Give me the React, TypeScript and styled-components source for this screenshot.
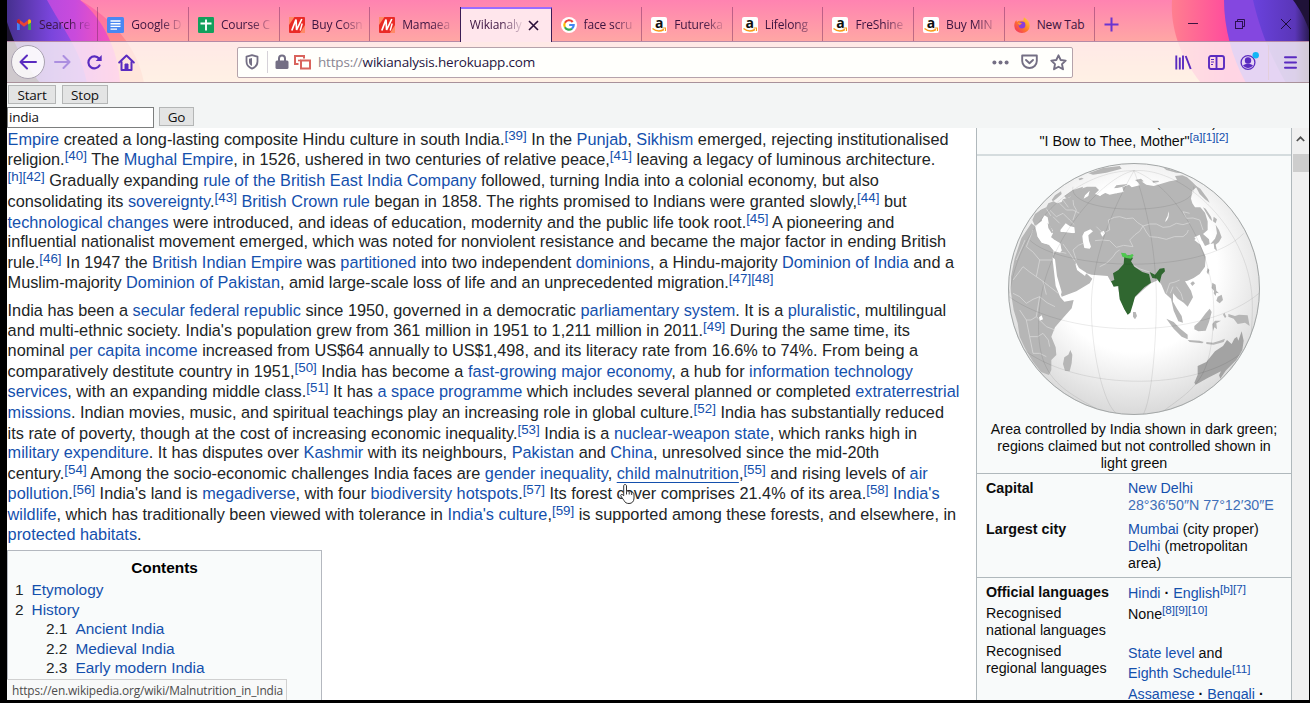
import React from "react";
import styled, { createGlobalStyle, css } from "styled-components";

const sans = `"Liberation Sans", Arial, sans-serif`;
const ui = `"Open Sans", "Noto Sans", sans-serif`;

const GlobalStyle = createGlobalStyle`
  * { box-sizing: border-box; }
  body { margin: 0; background: #000; overflow: hidden; font-family: ${sans}; }
`;

const Screen = styled.div`
  position: relative;
  width: 1310px;
  height: 703px;
  padding: 0 1px 3px 7px;
  background: #000;
  display: flex;
  flex-direction: column;
`;

/* ---------- browser chrome ---------- */

const Chrome = styled.header`
  position: relative;
  height: 83px;
  flex: none;
  border-bottom: 1px solid #a8919a;
  overflow: hidden;
`;

const Backdrop = styled.svg`
  position: absolute;
  inset: 0;
  display: block;
`;

const TabStrip = styled.div`
  position: relative;
  display: flex;
  height: 42px;
  padding-top: 7px;
  border-bottom: 1px solid #b58aa6;
`;

const Tab = styled.div<{ $active?: boolean; $w?: number }>`
  flex: none;
  width: ${(p) => p.$w ?? 90.65}px;
  height: 34px;
  display: flex;
  align-items: center;
  gap: 7px;
  padding: 1px 0 0 9px;
  border-right: 1px solid rgba(110, 40, 90, 0.45);
  ${(p) =>
    p.$active &&
    css`
      height: 35px;
      padding: 0 0 1px 9px;
      gap: 5px;
      background: #ffe6ec;
      border-top: 2px solid #9a6cff;
      border-right: 1px solid #3b1d55;
      box-shadow: -1px 0 0 #3b1d55;
    `}
`;

const TabLabel = styled.span<{ $fade?: boolean; $w?: number }>`
  font-family: ${ui};
  font-size: 12px;
  line-height: 18px;
  letter-spacing: -0.15px;
  width: ${(p) => p.$w ?? 51}px;
  overflow: hidden;
  white-space: nowrap;
  color: #3c1440;
  ${(p) =>
    p.$fade &&
    css`
      mask-image: linear-gradient(to right, #000 58%, transparent 104%);
    `}
`;

const PlusButton = styled.div`
  width: 33px;
  height: 34px;
  display: flex;
  align-items: center;
  justify-content: center;
`;

const WindowButtons = styled.div`
  margin-left: auto;
  height: 34px;
  display: flex;
  align-items: center;
  gap: 34.5px;
  padding-right: 17px;
`;

const NavBar = styled.div`
  position: relative;
  height: 40px;
  display: flex;
  align-items: center;
`;

const NavButtons = styled.div`
  display: flex;
  align-items: center;
  width: 230px;
  padding-left: 4px;
`;

const BackButton = styled.div`
  width: 34px;
  height: 34px;
  border-radius: 50%;
  border: 1px solid #a9a2b0;
  background: rgba(255, 255, 255, 0.8);
  display: flex;
  align-items: center;
  justify-content: center;
  margin-right: 7px;
`;

const NavIcon = styled.div<{ $mr?: number }>`
  width: 20px;
  height: 20px;
  margin-right: ${(p) => p.$mr ?? 0}px;
  display: flex;
  align-items: center;
  justify-content: center;
`;

const UrlBar = styled.div`
  width: 836px;
  height: 31px;
  border: 1px solid #b5a3ab;
  border-radius: 2px;
  background: #fffffc;
  display: flex;
  align-items: center;
  padding: 0 5px 0 6px;
`;

const UrlDivider = styled.i`
  width: 1px;
  height: 22px;
  background: #d6d2d8;
  margin: 0 7px;
`;

const Spacer = styled.i`
  width: 5px;
`;

const UrlText = styled.div`
  font-family: ${ui};
  font-size: 13.5px;
  line-height: 20px;
  letter-spacing: -0.18px;
  color: #8a8592;
  margin-left: 7px;
  flex: 1;
  b { font-weight: 400; color: #25143f; }
`;

const UrlIcons = styled.div`
  display: flex;
  align-items: center;
  gap: 12px;
`;

const Tools = styled.div`
  margin-left: auto;
  display: flex;
  align-items: center;
  padding-right: 12px;
`;

const ToolDivider = styled.i`
  width: 1px;
  height: 35px;
  background: #e3cfdc;
  margin: 0 15px 0 9px;
`;

/* ---------- page ---------- */

const Controls = styled.div`
  flex: none;
  height: 45px;
  background: #f3f5f5;
  display: flex;
  flex-direction: column;
  gap: 2px;
  padding-top: 2px;
`;

const ControlRow = styled.div<{ $gap: number }>`
  display: flex;
  gap: ${(p) => p.$gap}px;
  height: 21px;
  padding-left: 1px;
`;

const Button = styled.button<{ $w: number }>`
  width: ${(p) => p.$w}px;
  height: 19px;
  padding: 0;
  border: 1px solid #b4b6b6;
  border-radius: 0;
  background: #e3e4e4;
  font: 13.5px/18px ${ui};
  letter-spacing: -0.2px;
  color: #111;
`;

const Field = styled.input`
  width: 147px;
  height: 21px;
  margin-left: -1px;
  padding: 0 1px 1px 1px;
  border: 1px solid #7c7e7e;
  background: #fff;
  font: 13.5px/18px ${ui};
  letter-spacing: -0.2px;
  color: #111;
`;

const Page = styled.main`
  position: relative;
  flex: 1;
  min-height: 0;
  display: flex;
  background: #fff;
  overflow: hidden;
`;

const Article = styled.article`
  width: 969px;
  flex: none;
  padding-top: 0.4px;
  font-size: 16.3px;
  color: #222526;
`;

const Paragraph = styled.p`
  margin: 0 0 8px;
  padding-left: 0.6px;
`;

const Line = styled.span<{ $sup?: boolean }>`
  display: block;
  white-space: nowrap;
  line-height: 19.4px;
  padding-top: ${(p) => (p.$sup ? 1.3 : 0)}px;
`;

const A = styled.a<{ $hover?: boolean }>`
  color: #1450ad;
  text-decoration: ${(p) => (p.$hover ? "underline" : "none")};
  text-underline-offset: 3px;
`;

const Ref = styled.sup`
  font-size: 82%;
  line-height: 0;
  vertical-align: 5.4px;
  color: #1450ad;
`;

const Toc = styled.nav`
  width: 315px;
  height: 200px;
  margin-top: -2px;
  border: 1px solid #b4b8bf;
  background: #f9fbfb;
  font-size: 15.4px;
  padding: 7px 7px 0 7px;
`;

const TocTitle = styled.div`
  text-align: center;
  font-weight: 700;
  color: #000;
  line-height: 19px;
  margin-bottom: 3.4px;
`;

const TocItem = styled.div<{ $sub?: boolean; $h: number }>`
  height: ${(p) => p.$h}px;
  line-height: 20px;
  display: flex;
  gap: 8px;
  padding-left: ${(p) => (p.$sub ? 31 : 0)}px;
`;

const Infobox = styled.aside`
  width: 316px;
  flex: none;
  height: 700px;
  border: 1px solid #b0b8bc;
  border-top: 0;
  background: #f8fafa;
  font-size: 14.28px;
  line-height: 17.3px;
  color: #0c0c0c;
  text-align: center;
`;

const Motto = styled.div`
  height: 28px;
  border-bottom: 2px solid #d5dcde;
  overflow: hidden;
  display: flex;
  flex-direction: column;
  justify-content: flex-end;
  padding-bottom: 4px;
`;

const MottoLine = styled.div<{ $h: number }>`
  flex: none;
  height: ${(p) => p.$h}px;
  white-space: nowrap;
`;

const Figure = styled.figure`
  margin: 0;
  height: 318px;
  padding: 6px 0 0;
  border-bottom: 1px solid #b0b8bc;
  svg { display: block; margin: 0 auto; }
`;

const Caption = styled.figcaption`
  padding: 0 10px;
  margin-top: 4.5px;
`;

const Facts = styled.div<{ $h: number; $line?: boolean }>`
  height: ${(p) => p.$h}px;
  text-align: left;
  padding: 6px 0 0 9px;
  ${(p) => p.$line && css`border-bottom: 1px solid #b0b8bc;`}
`;

const Fact = styled.div<{ $h: number }>`
  display: grid;
  grid-template-columns: 142px 1fr;
  height: ${(p) => p.$h}px;
  white-space: nowrap;
`;

const Value = styled.div<{ $dy?: number; $lh?: number }>`
  padding-top: ${(p) => p.$dy ?? 0}px;
  line-height: ${(p) => p.$lh ?? 17.3}px;
`;

const Dot = styled.b`
  font-weight: 700;
`;

const Coord = styled(A)`
  color: #3f6fb8;
`;

const Scrollbar = styled.div`
  flex: 1;
  background: #f0f0f0;
  display: flex;
  flex-direction: column;
  align-items: center;
`;

const ScrollArrow = styled.div`
  height: 26px;
  display: flex;
  align-items: center;
  padding-bottom: 5px;
`;

const Thumb = styled.div`
  width: 16px;
  height: 18px;
  background: #cdcdcd;
`;

const StatusBar = styled.div`
  position: absolute;
  left: 0;
  bottom: 0;
  height: 21px;
  width: 280px;
  padding-left: 5px;
  border-top: 1px solid #d0d0d0;
  border-right: 1px solid #d0d0d0;
  background: #f8f9f9;
  font: 11.9px/20px ${ui};
  letter-spacing: -0.15px;
  color: #4c4c4c;
  white-space: nowrap;
`;

const Pointer = styled.svg`
  position: absolute;
  left: 618.5px;
  top: 483px;
`;

/* ---------- drawings ---------- */

const Theme = () => (
  <Backdrop width="1302" height="83" viewBox="7 0 1302 83" preserveAspectRatio="none">
    <defs>
      <linearGradient id="sky" x1="0" y1="0" x2="0" y2="1">
        <stop offset="0" stopColor="#ff83b1" />
        <stop offset="0.5" stopColor="#ffa7a4" />
        <stop offset="1" stopColor="#ffd0a0" />
      </linearGradient>
      <linearGradient id="violet" x1="0" y1="0" x2="1" y2="0">
        <stop offset="0" stopColor="#46308f" />
        <stop offset="0.55" stopColor="#7a45dc" />
        <stop offset="1" stopColor="#a44fe8" />
      </linearGradient>
      <linearGradient id="magenta" x1="0" y1="0" x2="1" y2="0">
        <stop offset="0" stopColor="#a048e4" />
        <stop offset="0.6" stopColor="#c94bdc" />
        <stop offset="1" stopColor="#ff55b4" />
      </linearGradient>
      <linearGradient id="coral" x1="0" y1="0" x2="0" y2="1">
        <stop offset="0" stopColor="#ff5fb0" />
        <stop offset="0.5" stopColor="#ff8a88" />
        <stop offset="1" stopColor="#ffa070" />
      </linearGradient>
      <linearGradient id="dusk" x1="0" y1="0" x2="1" y2="0">
        <stop offset="0" stopColor="#6a42dd" />
        <stop offset="0.75" stopColor="#5a36b8" />
        <stop offset="1" stopColor="#2c1c55" />
      </linearGradient>
      <linearGradient id="rose" x1="0" y1="0" x2="1" y2="0">
        <stop offset="0" stopColor="#ff7f8f" />
        <stop offset="0.4" stopColor="#ff4d9c" />
        <stop offset="1" stopColor="#f93fae" />
      </linearGradient>
    </defs>
    <rect x="7" width="1302" height="83" fill="url(#sky)" />
    <path d="M80 0C112 18 138 48 144 83H7V0Z" fill="url(#coral)" />
    <path d="M80 0C104 20 118 50 120 83H7V0Z" fill="url(#magenta)" />
    <path d="M47 0C62 28 80 48 87 83H7V0Z" fill="url(#violet)" />
    <path d="M7 22C14 45 24 62 40 83H7Z" fill="#1d1430" />
    <path d="M1172 0C1170 30 1182 60 1201 83H1309V0Z" fill="url(#rose)" />
    <path d="M1224 0C1224 28 1232 58 1246 83H1309V0Z" fill="#8447e0" />
    <path d="M1253 0C1260 30 1270 55 1286 83H1309V0Z" fill="url(#dusk)" />
    <path d="M1293 0C1299 8 1305 18 1309 30V0Z" fill="#1f1238" />
    <rect x="7" y="41" width="1302" height="42" fill="#fffaf8" fillOpacity="0.79" />
  </Backdrop>
);

const GmailIcon = () => (
  <svg width="16" height="16" viewBox="0 0 16 16">
    <path d="M1 3.5V13h2.8V6Z" fill="#4285f4" />
    <path d="M15 3.5V13h-2.8V6Z" fill="#34a853" />
    <path d="M1 4.2C1 2.6 2.8 2.2 3.8 3L8 6.2 12.200 3C13.200 2.200 15 2.600 15 4.200L8 9.700Z" fill="#ea4335" />
    <path d="M12.200 3C13.200 2.200 15 2.600 15 4.200V5.400L12.200 7.500Z" fill="#fbbc04" />
    <path d="M1 4.200C1 2.600 2.800 2.200 3.800 3V7.500L1 5.400Z" fill="#c5221f" />
  </svg>
);
const DocsIcon = () => (
  <svg width="17" height="16" viewBox="0 0 17 16">
    <rect width="17" height="16" rx="1.500" fill="#4a87f2" />
    <path d="M3.500 4h10M3.500 6.700h10M3.500 9.400h10M3.500 12.100h6.500" stroke="#fff" strokeWidth="1.400" />
  </svg>
);
const SheetsIcon = () => (
  <svg width="16" height="16" viewBox="0 0 16 16">
    <rect width="16" height="16" rx="1.200" fill="#12a05c" />
    <path d="M8 2.500v11M2.500 6.500h11" stroke="#fff" strokeWidth="1.900" />
  </svg>
);
const SlashIcon = () => (
  <svg width="16" height="16" viewBox="0 0 16 16">
    <rect width="16" height="16" rx="1" fill="#ea2a26" />
    <path d="M0 0h5.500L0 8ZM16 16h-5l5-8Z" fill="#ff8a66" />
    <path d="M2.800 13.500L7 2.500l.6 10.500L12.800 2" fill="none" stroke="#fff" strokeWidth="1.700" />
    <path d="M11.200 13.500l2-7" fill="none" stroke="#fff" strokeWidth="1.400" />
  </svg>
);
const GoogleIcon = () => (
  <svg width="16" height="16" viewBox="0 0 16 16">
    <circle cx="8" cy="8" r="8" fill="#fff" />
    <g fill="none" strokeWidth="2.200">
      <path d="M11.700 5A4.700 4.700 0 0 0 3.900 5.700" stroke="#ea4335" />
      <path d="M3.900 5.700A4.700 4.700 0 0 0 3.900 10.300" stroke="#fbbc05" />
      <path d="M3.900 10.300A4.700 4.700 0 0 0 11 11.600" stroke="#34a853" />
      <path d="M11 11.600A4.700 4.700 0 0 0 12.700 8H8.200" stroke="#4285f4" />
    </g>
  </svg>
);
const AIconBox = styled.span`
  position: relative;
  width: 16px;
  height: 16px;
  border-radius: 2px;
  background: #fff;
  font: 700 14px/11px ${ui};
  color: #111;
  text-align: center;
  svg { position: absolute; left: 0; bottom: 0; }
`;
const AmazonIcon = () => (
  <AIconBox>
    a
    <svg width="16" height="6" viewBox="0 0 16 6">
      <path d="M1.500 1.500Q7 6 13 2.500" fill="none" stroke="#f79a1c" strokeWidth="1.500" />
      <path d="M11.500 1h3v3" fill="none" stroke="#f79a1c" strokeWidth="1.100" />
    </svg>
  </AIconBox>
);
const FirefoxIcon = () => (
  <svg width="16" height="16" viewBox="0 0 16 16">
    <defs>
      <linearGradient id="fx" x1="1" y1="0" x2="0" y2="1">
        <stop offset="0" stopColor="#ffdf3a" />
        <stop offset="0.5" stopColor="#ff7a2a" />
        <stop offset="1" stopColor="#f0256a" />
      </linearGradient>
    </defs>
    <path d="M10 .3C12.500 2 15.800 4.800 15.700 9A7.700 7 0 0 1 .3 9C.2 6.500 1 4.500 2.300 3.200L3 5C4 4 5 3.600 6.500 3.800L9.500 3.500C9.500 2 9.600 1.200 10 .3Z" fill="url(#fx)" />
    <circle cx="8" cy="8" r="3.400" fill="#8a3ddb" />
    <path d="M3.500 6C5 5 6.500 5.500 8 6.500 7 7.500 6 7.500 5.800 8.500" fill="#ff9a2e" />
  </svg>
);

const purple = "#5a2bc0";
const grey = "#746f84";

const BackIcon = () => (
  <svg width="18" height="16" viewBox="0 0 18 16" fill="none" stroke={purple} strokeWidth="2" strokeLinecap="round" strokeLinejoin="round">
    <path d="M17 8H2M8 1.500L1.500 8 8 14.500" />
  </svg>
);
const ForwardIcon = () => (
  <svg width="17" height="14" viewBox="0 0 17 14" fill="none" stroke="#ac8fe0" strokeWidth="2" strokeLinecap="round" strokeLinejoin="round">
    <path d="M1 7h14M9.500 1L15.500 7l-6 6" />
  </svg>
);
const ReloadIcon = () => (
  <svg width="17" height="16" viewBox="0 0 17 16" fill="none" stroke={purple} strokeWidth="2.200">
    <path d="M13.500 11.500A6 6 0 1 1 13 4.500" strokeLinecap="round" />
    <path d="M15.700 1v6h-6z" fill={purple} stroke="none" />
  </svg>
);
const HomeIcon = () => (
  <svg width="17" height="17" viewBox="0 0 17 17" fill="none" stroke={purple} strokeWidth="2" strokeLinecap="round" strokeLinejoin="round">
    <path d="M1.200 8.500L8.500 1.500l7.300 7" />
    <path d="M3.500 8v8h10V8" />
    <path d="M7 15.500V10h3v5.500" fill={purple} strokeWidth="1" />
  </svg>
);
const ShieldIcon = () => (
  <svg width="16" height="16" viewBox="0 0 16 16">
    <path d="M8 1.200L13.500 2.600v5c0 3.600-2.300 5.800-5.500 7-3.200-1.200-5.500-3.400-5.500-7v-5Z" fill="none" stroke={grey} strokeWidth="1.800" strokeLinejoin="round" />
    <path d="M8 4L5 4.800v2.700C5 9.500 6 11 8 12Z" fill={grey} />
  </svg>
);
const LockIcon = () => (
  <svg width="14" height="16" viewBox="0 0 14 16">
    <rect x="0.500" y="6.500" width="13" height="8.500" rx="1.500" fill={grey} />
    <path d="M4 7V4.500a3 3 0 0 1 6 0V7" fill="none" stroke={grey} strokeWidth="2" />
  </svg>
);
const MixedIcon = () => (
  <svg width="17" height="15" viewBox="0 0 17 15" fill="none" stroke="#d9635c" strokeWidth="2">
    <path d="M4.500 9H1V1h9v2.500" />
    <rect x="7" y="5.500" width="9" height="8" />
    <path d="M4 5.500h3" strokeWidth="1.600" />
  </svg>
);
const DotsIcon = () => (
  <svg width="17" height="5" viewBox="0 0 17 5" fill={grey}>
    <circle cx="2.400" cy="2.500" r="2" />
    <circle cx="8.500" cy="2.500" r="2" />
    <circle cx="14.600" cy="2.500" r="2" />
  </svg>
);
const PocketIcon = () => (
  <svg width="17" height="16" viewBox="0 0 17 16" fill="none" stroke={grey} strokeWidth="1.900" strokeLinejoin="round" strokeLinecap="round">
    <path d="M1.200 1.500h14.600V7a7.300 7 0 0 1-14.600 0Z" />
    <path d="M5 6l3.500 3.300L12 6" />
  </svg>
);
const StarIcon = () => (
  <svg width="17" height="17" viewBox="0 0 17 17" fill="none" stroke={grey} strokeWidth="1.900" strokeLinejoin="round">
    <path d="M8.500 1.300l2.200 4.700 5 .6-3.700 3.500 1 5.200-4.500-2.600L4 15.300l1-5.200L1.300 6.600l5-.6Z" />
  </svg>
);
const LibraryIcon = () => (
  <svg width="17" height="15" viewBox="0 0 17 15" fill="none" stroke={purple} strokeWidth="1.900">
    <path d="M1.300 0.500v14M4.800 2.500v12M8 0.500v14M10.700 1l5 13" />
  </svg>
);
const SidebarIcon = () => (
  <svg width="17" height="15" viewBox="0 0 17 15" fill="none" stroke={purple} strokeWidth="1.900">
    <rect x="1" y="1" width="15" height="13" rx="2" />
    <path d="M8.500 1v13" />
    <path d="M3 4.500h3M3 7h3M3 9.500h2" strokeWidth="1" />
  </svg>
);
const AccountIcon = () => (
  <svg width="20" height="20" viewBox="0 0 20 20">
    <circle cx="9" cy="10.500" r="6.900" fill="none" stroke={purple} strokeWidth="1.300" />
    <circle cx="9" cy="8.500" r="3.200" fill={purple} />
    <path d="M4 13.500c2.500-2.500 7.500-2.500 10 0-2.500 3.300-7.500 3.300-10 0Z" fill={purple} />
    <circle cx="16.700" cy="3.300" r="3.200" fill="#12b5f5" />
  </svg>
);
const MenuIcon = () => (
  <svg width="13" height="13" viewBox="0 0 13 13" stroke={purple} strokeWidth="2" strokeLinecap="round">
    <path d="M1 1.200h11M1 6.500h11M1 11.800h11" />
  </svg>
);

const Globe = () => (
  <svg width="254" height="254" viewBox="112 126 762 762">
    <defs>
      <radialGradient id="ocean" cx="0.5" cy="0.42" r="0.6">
        <stop offset="0.55" stopColor="#fff" />
        <stop offset="1" stopColor="#d6d6d6" />
      </radialGradient>
      <clipPath id="disc">
        <circle cx="493" cy="507" r="378" />
      </clipPath>
    </defs>
    <circle cx="493" cy="507" r="378" fill="url(#ocean)" />
    <g clipPath="url(#disc)">
      <g fill="#b6b6b6">
        {/* Africa */}
        <path d="M185 310L200 322 204 350 218 368 238 374 252 392 250 420 258 465 268 510 272 532 284 545 312 540 306 565 282 592 256 622 245 650 258 682 260 705 245 720 245 750 238 765 214 756 190 725 166 685 150 650 144 610 132 570 124 520 124 470 135 415 155 355Z" />
        {/* Eurasia */}
        <path d="M188 300L196 282 216 268 230 262 236 250 252 244 262 250 276 246 280 238 300 232 310 222 330 208 352 200 378 200 388 210 376 222 392 228 400 216 420 224 440 220 462 216 458 202 478 194 486 202 510 196 504 182 518 186 530 194 552 198 580 190 600 184 622 180 616 168 638 166 652 172 668 186 682 200 668 212 664 236 668 250 676 262 692 262 706 278 714 304 714 330 700 342 718 358 720 372 706 378 698 362 684 352 674 360 692 374 700 392 708 410 706 440 690 462 672 474 654 482 646 484 664 512 670 532 654 560 642 548 624 536 610 520 610 545 622 566 636 588 640 608 626 604 612 572 604 536 586 520 576 496 566 480 544 490 520 510 494 534 486 560 475 584 464 566 450 530 444 498 424 486 414 468 366 464 338 456 326 444 316 430 322 446 334 458 352 462 368 476 360 490 320 514 276 530 272 516 262 480 250 436 248 412 254 394 272 398 276 390 262 372 250 368 240 340 222 322 206 316 196 318Z" />
        {/* Arctic islands and north-east fringe */}
        <path d="M356 160L400 144 450 138 456 146 410 158 370 164ZM580 142L640 160 620 158 590 150ZM432 206L440 196 474 192 460 200ZM496 180l18 -4 8 8 -14 4ZM548 182l18 0 2 4 -18 2ZM676 196L692 206 714 236 720 248 706 238 690 222ZM326 176l10 -3 6 3 -12 5ZM284 228L310 210 340 200 336 214 310 226 290 236ZM246 240l10 -14 18 -12 2 8 -16 14 -10 8ZM200 288l12 -18 8 0 -6 18Z" />
        {/* Sakhalin, Japan, Taiwan, Philippines */}
        <path d="M700 262l8 4 16 24 4 14 -8 -8 -12 -20ZM732 290l10 8 -4 12 -8 -6ZM738 314L748 330 756 352 748 366 738 374 742 392 734 386 732 370 722 372 736 356 742 340ZM714 444l5 6 -3 14 -5 -8ZM728 488l10 6 2 18 8 8 -10 -2 -12 -14ZM744 530l12 -6 4 16 -10 10 -10 -8ZM734 510l6 8 -2 10 -6 -8Z" />
        {/* Sri Lanka, Hainan, Madagascar */}
        <path d="M490 576l8 0 4 12 -6 10 -6 -8ZM662 490l8 -6 6 6 -8 8ZM302 690l6 14 -2 26 -6 24 -14 -2 -6 -20 4 -20 12 -8Z" />
        {/* Sunda islands, New Guinea */}
        <path d="M590 596L612 606 632 626 654 644 654 658 636 650 612 626ZM654 660L690 662 702 666 698 670 660 666ZM674 618L690 604 708 580 720 566 726 576 718 606 708 632 686 634 674 628ZM728 612l8 -10 18 0 -14 8 2 18 -8 -6 -4 12ZM710 666l20 2 20 -6 16 -6 -4 10 -30 8 -22 -2ZM776 582l20 6 12 -4 26 2 6 32 -14 -10 -22 4 -12 -16 -16 -6ZM764 578l6 12 -4 4 -6 -10Z" />
        {/* Australia */}
        <path d="M816 634L822 662 818 690 800 720 768 752 752 776 748 766 754 754 714 774 678 794 674 788 684 764 684 738 710 726 736 694 760 678 772 660 786 672 794 656 802 650 806 662Z" fill="#a3a3a3" />
      </g>
      {/* inland seas and gulfs */}
      <g fill="#fff">
        <path d="M196 318L212 306 226 296 234 312 240 330 250 340 244 352 262 364 272 370 276 392 250 388 238 374 216 368 204 350Z" />
        <path d="M216 300l8 -14 10 6 4 22 12 18 -4 8 -16 -16ZM272 330l16 -20 12 8 14 4 2 16 -24 6 -18 0Z" />
        <path d="M344 336l18 -8 8 6 -14 12 2 16 6 18 -4 6 -16 -2 -4 -18 -2 -18ZM392 338l10 -6 4 8 -8 10ZM248 412l8 6 6 50 14 48 -4 16 -14 -34ZM318 426l10 18 22 14 -4 10 -24 -18ZM384 220l16 -14 50 -2 -8 16 -30 -4 -22 12ZM674 352l16 -8 6 16 -10 6ZM208 592l8 -6 4 12 -10 4Z" />
        <path d="M596 274q6 20 -10 32q4 -12 8 -18ZM346 226l14 -14 -4 16 -14 8Z" />
      </g>
      {/* land over the Mediterranean */}
      <path d="M234 308l8 10 8 18 -4 4 -10 -16ZM250 344l12 -8 20 0 30 4 0 16 -20 8 -28 0 -12 -6Z" fill="#b6b6b6" />
      {/* political borders */}
      <g fill="none" stroke="#dedede" strokeWidth="2">
        <path d="M416 300L434 292 450 290 470 296 490 294 504 308 520 318 540 312 560 312 580 322 600 320 620 310 640 314 660 308M520 318L530 336 540 350 564 352 590 358 614 350 640 350 652 340 656 330M416 300L420 330 400 340 380 320M376 362L396 360 420 362 440 382 462 376 490 380M490 380L480 360 496 344 510 334 520 318" />
        <path d="M390 440L410 430 430 410 440 396 450 390M320 420L310 390 326 376 340 370M280 372L300 400 316 424M272 396L290 400M492 436L508 446 520 450 540 456M590 520L600 490 616 486 630 480M640 540L634 520 620 500M610 500l-8 20" />
        <path d="M660 280L640 275 650 295 670 294 690 300 700 330M240 270L260 290 280 280 300 300M270 250L290 270 310 270 330 280M310 240L312 256 320 270M250 290L270 310M280 240L296 262M230 266l14 22M300 300l14 14M320 270l-10 30" />
        <path d="M190 330L170 380 190 396 210 420 200 470 180 456 160 440 144 462 130 480M200 470L220 484 240 500 266 520M130 520L150 530 170 550 190 538 210 530 232 548 256 560M210 530L200 590 184 600 170 600 150 570M200 590L230 620 256 630M170 600L180 650 204 650 220 640 236 660 240 680M180 650L190 700 210 700 230 710M210 420L250 420M166 360L140 420M220 484l10 40" />
      </g>
      {/* India */}
      <path d="M464 408L480 406 490 414 484 424 494 440 518 456 538 462 544 488 524 502 496 530 490 552 482 578 474 584 464 568 450 538 446 498 432 500 424 484 434 480 430 460 446 450 462 432Z" fill="#306730" />
      <path d="M540 456L556 464 570 446 584 444 586 454 576 464 570 488 562 476 548 474Z" fill="#306730" />
      <path d="M454 398l14 2 6 8 14 -6 4 4 -8 10 -14 -2 -12 -4Z" fill="#50c850" />
      {/* graticule */}
      <g fill="none" stroke="#000" strokeOpacity="0.13" strokeWidth="2">
        <path d="M493 152C420 280 365 430 365 560S400 850 440 880" />
        <path d="M493 152C540 280 562 430 560 560S545 840 520 885" />
        <path d="M493 152C400 170 230 360 210 560S260 800 380 866" />
        <path d="M493 152C620 200 740 400 732 590S680 800 580 874" />
        <path d="M493 152C330 150 150 300 120 520" />
        <path d="M493 152C640 140 850 330 848 560S800 700 780 750" />
        <path d="M310 200C290 290 690 290 672 200" />
        <path d="M180 360C270 450 700 470 822 340" />
        <path d="M118 530C300 660 700 660 868 520" />
        <path d="M150 680C320 820 720 820 846 670" />
      </g>
    </g>
    <circle cx="493" cy="507" r="376.500" fill="none" stroke="#a3a7a7" strokeWidth="3" />
  </svg>
);

/* ---------- content ---------- */

const tabs: { icon: React.ReactNode; label: string; w?: number }[] = [
  { icon: <GmailIcon />, label: "Search re", w: 91.3 },
  { icon: <DocsIcon />, label: "Google D" },
  { icon: <SheetsIcon />, label: "Course C" },
  { icon: <SlashIcon />, label: "Buy Cosn" },
  { icon: <SlashIcon />, label: "Mamaea" },
  { icon: null, label: "Wikianaly" },
  { icon: <GoogleIcon />, label: "face scru" },
  { icon: <AmazonIcon />, label: "Futureka" },
  { icon: <AmazonIcon />, label: "Lifelong" },
  { icon: <AmazonIcon />, label: "FreShine" },
  { icon: <AmazonIcon />, label: "Buy MIN" },
  { icon: <FirefoxIcon />, label: "New Tab" },
];

export default function App() {
  return (
    <Screen>
      <GlobalStyle />
      <Chrome>
        <Theme />
        <TabStrip>
          {tabs.map((t, i) =>
            t.icon ? (
              <Tab key={i} $w={t.w}>
                {t.icon}
                <TabLabel $fade={t.label !== "New Tab"}>{t.label}</TabLabel>
              </Tab>
            ) : (
              <Tab key={i} $active>
                <TabLabel $fade $w={53}>{t.label}</TabLabel>
                <svg width="11" height="11" viewBox="0 0 11 11" stroke="#2a1038" strokeWidth="1.600">
                  <path d="M1 1l9 9M10 1l-9 9" />
                </svg>
              </Tab>
            )
          )}
          <PlusButton>
            <svg width="15" height="15" viewBox="0 0 15 15" stroke="#6a35d0" strokeWidth="2">
              <path d="M7.500 .5v14M.5 7.500h14" />
            </svg>
          </PlusButton>
          <WindowButtons>
            <svg width="12" height="12" viewBox="0 0 12 12" stroke="#3c1440"><path d="M1 5.500h10" /></svg>
            <svg width="12" height="12" viewBox="0 0 12 12" fill="none" stroke="#2b1050">
              <rect x="1.500" y="3.500" width="7" height="7" />
              <path d="M3.500 3.500v-2h7v7h-2" />
            </svg>
            <svg width="12" height="12" viewBox="0 0 12 12" stroke="#1c0c38"><path d="M1 1l10 10M11 1L1 11" /></svg>
          </WindowButtons>
        </TabStrip>
        <NavBar>
          <NavButtons>
            <BackButton><BackIcon /></BackButton>
            <NavIcon $mr={12}><ForwardIcon /></NavIcon>
            <NavIcon $mr={12}><ReloadIcon /></NavIcon>
            <NavIcon><HomeIcon /></NavIcon>
          </NavButtons>
          <UrlBar>
            <ShieldIcon />
            <UrlDivider />
            <LockIcon />
            <Spacer />
            <MixedIcon />
            <UrlText>https://<b>wikianalysis.herokuapp.com</b></UrlText>
            <UrlIcons><DotsIcon /><PocketIcon /><StarIcon /></UrlIcons>
          </UrlBar>
          <Tools>
            <NavIcon $mr={13}><LibraryIcon /></NavIcon>
            <NavIcon $mr={13}><SidebarIcon /></NavIcon>
            <NavIcon><AccountIcon /></NavIcon>
            <ToolDivider />
            <MenuIcon />
          </Tools>
        </NavBar>
      </Chrome>

      <Controls>
        <ControlRow $gap={6}>
          <Button $w={48}>Start</Button>
          <Button $w={46}>Stop</Button>
        </ControlRow>
        <ControlRow $gap={5}>
          <Field defaultValue="india" />
          <Button $w={35}>Go</Button>
        </ControlRow>
      </Controls>

      <Page>
        <Article>
          <Paragraph>
            <Line $sup><A>Empire</A> created a long-lasting composite Hindu culture in south India.<Ref>[39]</Ref> In the <A>Punjab</A>, <A>Sikhism</A> emerged, rejecting institutionalised</Line>
            <Line $sup>religion.<Ref>[40]</Ref> The <A>Mughal Empire</A>, in 1526, ushered in two centuries of relative peace,<Ref>[41]</Ref> leaving a legacy of luminous architecture.</Line>
            <Line $sup><Ref>[h][42]</Ref> Gradually expanding <A>rule of the British East India Company</A> followed, turning India into a colonial economy, but also</Line>
            <Line $sup>consolidating its <A>sovereignty</A>.<Ref>[43]</Ref> <A>British Crown rule</A> began in 1858. The rights promised to Indians were granted slowly,<Ref>[44]</Ref> but</Line>
            <Line $sup><A>technological changes</A> were introduced, and ideas of education, modernity and the public life took root.<Ref>[45]</Ref> A pioneering and</Line>
            <Line>influential nationalist movement emerged, which was noted for nonviolent resistance and became the major factor in ending British</Line>
            <Line $sup>rule.<Ref>[46]</Ref> In 1947 the <A>British Indian Empire</A> was <A>partitioned</A> into two independent <A>dominions</A>, a Hindu-majority <A>Dominion of India</A> and a</Line>
            <Line $sup>Muslim-majority <A>Dominion of Pakistan</A>, amid large-scale loss of life and an unprecedented migration.<Ref>[47][48]</Ref></Line>
          </Paragraph>
          <Paragraph>
            <Line>India has been a <A>secular federal republic</A> since 1950, governed in a democratic <A>parliamentary system</A>. It is a <A>pluralistic</A>, multilingual</Line>
            <Line $sup>and multi-ethnic society. India's population grew from 361 million in 1951 to 1,211 million in 2011.<Ref>[49]</Ref> During the same time, its</Line>
            <Line>nominal <A>per capita income</A> increased from US$64 annually to US$1,498, and its literacy rate from 16.6% to 74%. From being a</Line>
            <Line $sup>comparatively destitute country in 1951,<Ref>[50]</Ref> India has become a <A>fast-growing major economy</A>, a hub for <A>information technology</A></Line>
            <Line $sup><A>services</A>, with an expanding middle class.<Ref>[51]</Ref> It has <A>a space programme</A> which includes several planned or completed <A>extraterrestrial</A></Line>
            <Line $sup><A>missions</A>. Indian movies, music, and spiritual teachings play an increasing role in global culture.<Ref>[52]</Ref> India has substantially reduced</Line>
            <Line $sup>its rate of poverty, though at the cost of increasing economic inequality.<Ref>[53]</Ref> India is a <A>nuclear-weapon state</A>, which ranks high in</Line>
            <Line><A>military expenditure</A>. It has disputes over <A>Kashmir</A> with its neighbours, <A>Pakistan</A> and <A>China</A>, unresolved since the mid-20th</Line>
            <Line $sup>century.<Ref>[54]</Ref> Among the socio-economic challenges India faces are <A>gender inequality</A>, <A $hover>child malnutrition</A>,<Ref>[55]</Ref> and rising levels of <A>air</A></Line>
            <Line $sup><A>pollution</A>.<Ref>[56]</Ref> India's land is <A>megadiverse</A>, with four <A>biodiversity hotspots</A>.<Ref>[57]</Ref> Its forest cover comprises 21.4% of its area.<Ref>[58]</Ref> <A>India's</A></Line>
            <Line $sup><A>wildlife</A>, which has traditionally been viewed with tolerance in <A>India's culture</A>,<Ref>[59]</Ref> is supported among these forests, and elsewhere, in</Line>
            <Line><A>protected habitats</A>.</Line>
          </Paragraph>
          <Toc>
            <TocTitle>Contents</TocTitle>
            <TocItem $h={20}>1<A>Etymology</A></TocItem>
            <TocItem $h={19}>2<A>History</A></TocItem>
            <TocItem $sub $h={19.5}>2.1<A>Ancient India</A></TocItem>
            <TocItem $sub $h={19.5}>2.2<A>Medieval India</A></TocItem>
            <TocItem $sub $h={19.5}>2.3<A>Early modern India</A></TocItem>
          </Toc>
        </Article>

        <Infobox>
          <Motto>
            <MottoLine $h={19}>Vande Mataram (Sanskrit)</MottoLine>
            <MottoLine $h={17}>"I Bow to Thee, Mother"<Ref>[a][1][2]</Ref></MottoLine>
          </Motto>
          <Figure>
            <Globe />
            <Caption>Area controlled by India shown in dark green; regions claimed but not controlled shown in light green</Caption>
          </Figure>
          <Facts $h={104} $line>
            <Fact $h={40.5}>
              <b>Capital</b>
              <Value><A>New Delhi</A><br /><Coord>28°36′50″N 77°12′30″E</Coord></Value>
            </Fact>
            <Fact $h={52}>
              <b>Largest city</b>
              <Value><A>Mumbai</A> (city proper)<br /><A>Delhi</A> (metropolitan<br />area)</Value>
            </Fact>
          </Facts>
          <Facts $h={160}>
            <Fact $h={21}>
              <b>Official languages</b>
              <Value $dy={1}><A>Hindi</A> <Dot>·</Dot> <A>English</A><Ref>[b][7]</Ref></Value>
            </Fact>
            <Fact $h={37.5}>
              <div>Recognised<br />national languages</div>
              <Value $dy={1}>None<Ref>[8][9][10]</Ref></Value>
            </Fact>
            <Fact $h={80}>
              <div>Recognised<br />regional languages</div>
              <Value $lh={20.8}><A>State level</A> and<br /><A>Eighth Schedule</A><Ref>[11]</Ref><br /><A>Assamese</A> <Dot>·</Dot> <A>Bengali</A> <Dot>·</Dot></Value>
            </Fact>
          </Facts>
        </Infobox>

        <Scrollbar>
          <ScrollArrow>
            <svg width="9" height="6" viewBox="0 0 9 6" fill="none" stroke="#505050" strokeWidth="1.700"><path d="M.8 5L4.500 1.300 8.200 5" /></svg>
          </ScrollArrow>
          <Thumb />
        </Scrollbar>

        <StatusBar>https://en.wikipedia.org/wiki/Malnutrition_in_India</StatusBar>
      </Page>

      <Pointer width="18" height="22" viewBox="0 0 18 22">
        <path d="M6 1.500c1 0 1.500.700 1.500 1.500v5.500c.5-.700 2.500-.500 2.700.500.600-.600 2.300-.3 2.500.700.700-.500 2.300 0 2.300 1.300v4c0 3.500-2 5.500-5 5.500-2.500 0-4-1-5-3L1.800 13c-.5-1.300 1-2.300 2-1.200l.9 1V3c0-.9.500-1.500 1.300-1.500Z" fill="#fff" stroke="#333" />
        <path d="M7.500 8.500v3M10.200 9.200v2.300M12.700 10v2" stroke="#333" fill="none" />
      </Pointer>
    </Screen>
  );
}
